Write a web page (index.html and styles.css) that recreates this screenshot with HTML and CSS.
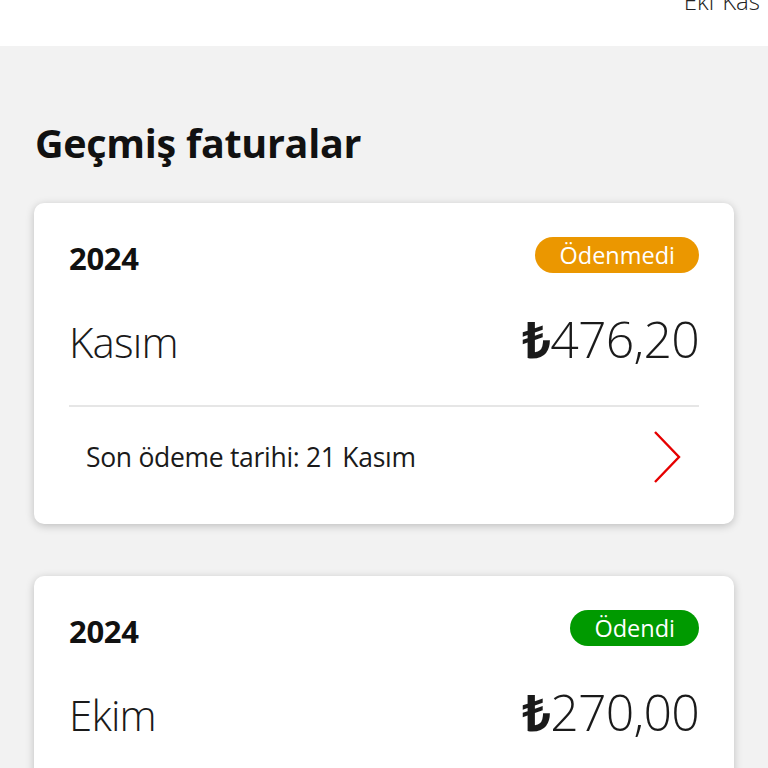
FILE: index.html
```html
<!DOCTYPE html>
<html lang="tr">
<head>
<meta charset="utf-8">
<link rel="stylesheet" href="styles.css">
</head>
<body>
<header class="topbar">
  <div class="tabs"><span class="tab">Eki</span><span class="tab">Kas</span></div>
</header>
<main class="content">
  <h1 class="title">Geçmiş faturalar</h1>
  <section class="card">
    <div class="row-top">
      <span class="year">2024</span>
      <span class="badge badge-unpaid">Ödenmedi</span>
    </div>
    <div class="row-main">
      <span class="month">Kasım</span>
      <span class="amount"><span class="cur">₺</span>476,20</span>
    </div>
    <div class="row-foot">
      <span class="due">Son ödeme tarihi: 21 Kasım</span>
      <svg class="chev" width="30" height="54" viewBox="0 0 30 54"><path d="M3 2 L27 27 L3 52" fill="none" stroke="#e60000" stroke-width="2.4"/></svg>
    </div>
  </section>
  <section class="card">
    <div class="row-top">
      <span class="year">2024</span>
      <span class="badge badge-paid">Ödendi</span>
    </div>
    <div class="row-main">
      <span class="month">Ekim</span>
      <span class="amount"><span class="cur">₺</span>270,00</span>
    </div>
    <div class="row-foot">
      <span class="due">Son ödeme tarihi: 21 Ekim</span>
      <svg class="chev" width="30" height="54" viewBox="0 0 30 54"><path d="M3 2 L27 27 L3 52" fill="none" stroke="#e60000" stroke-width="2.4"/></svg>
    </div>
  </section>
</main>
</body>
</html>
```
FILE: styles.css
```css
html, body {
  margin: 0;
  padding: 0;
  background: #f2f2f2;
  font-family: "Open Sans", "Noto Sans", sans-serif;
  color: #1a1a1a;
  height: 768px;
  overflow: hidden;
}
.topbar {
  height: 46px;
  background: #fff;
  overflow: hidden;
  display: flex;
  justify-content: flex-end;
  align-items: flex-start;
}
.tabs {
  display: flex;
  gap: 8px;
  margin-top: -15px;
  padding-right: 8px;
  font-size: 24px;
  line-height: 32px;
  font-weight: 300;
  color: #222;
}
.content {
  padding: 0 34px;
}
.title {
  margin: 73px 0 36px 1px;
  font-size: 39.5px;
  line-height: 48px;
  font-weight: 700;
  letter-spacing: -0.3px;
  color: #111;
}
.card {
  background: #fff;
  border-radius: 10px;
  box-shadow: 0 2px 8px rgba(0,0,0,0.22);
  padding: 34px 35px 0;
  margin-bottom: 52px;
}
.row-top {
  display: flex;
  justify-content: space-between;
  align-items: center;
  height: 36px;
}
.year {
  font-size: 31px;
  font-weight: 700;
  letter-spacing: -0.3px;
  color: #111;
  margin-top: 6px;
}
.badge {
  height: 36px;
  border-radius: 18px;
  color: #fff;
  font-size: 23.5px;
  line-height: 36px;
  font-weight: 400;
  padding: 0 24px;
}
.badge-unpaid { background: #eb9700; }
.badge-paid { background: #009a00; }
.row-main {
  display: flex;
  justify-content: space-between;
  align-items: baseline;
  margin-top: 38px;
  padding-bottom: 35px;
  border-bottom: 2px solid #e6e6e6;
}
.month {
  font-size: 42px;
  font-weight: 300;
  line-height: 56px;
  letter-spacing: -0.8px;
}
.amount {
  font-size: 50px;
  font-weight: 300;
  line-height: 56px;
  letter-spacing: -0.8px;
}
.cur {
  font-weight: 700;
}
.row-foot {
  display: flex;
  justify-content: space-between;
  align-items: center;
  height: 99px;
  padding: 0 17px 18px;
}
.due {
  font-size: 26.5px;
  font-weight: 400;
  letter-spacing: -0.3px;
}
.chev {
  display: block;
}
```
